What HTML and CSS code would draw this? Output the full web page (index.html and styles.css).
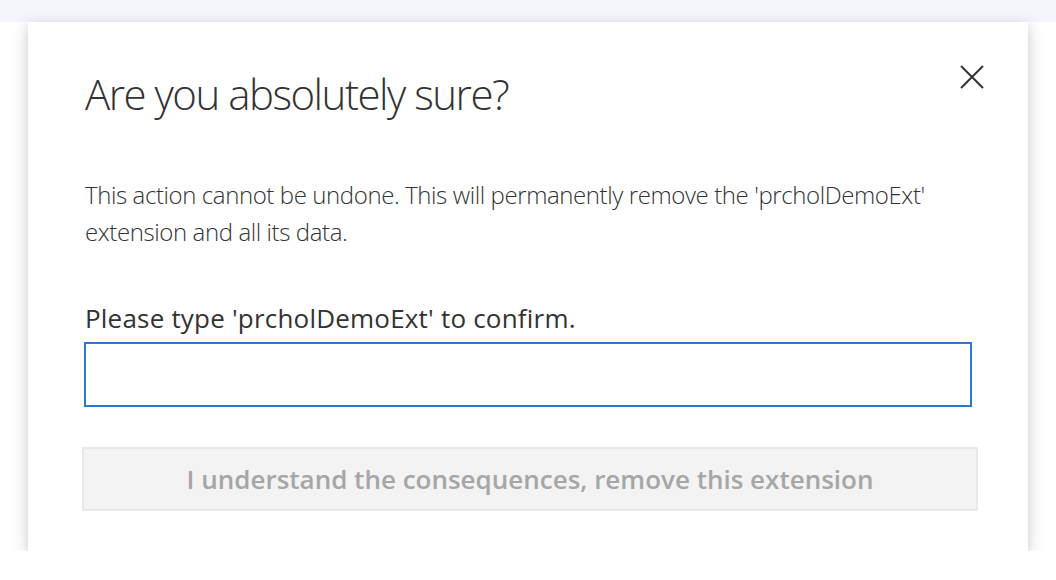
FILE: index.html
```html
<!DOCTYPE html>
<html lang="en">
<head>
<meta charset="utf-8">
<title>Remove extension</title>
<link rel="stylesheet" href="styles.css">
</head>
<body>
<div class="topbar"></div>
<div class="dialog" role="dialog" aria-labelledby="dlg-title">
  <div class="dialog-header">
    <h1 id="dlg-title" class="dialog-title">Are you absolutely sure?</h1>
    <button class="close-btn" aria-label="Close">
      <svg width="24" height="24" viewBox="0 0 24 24"><path d="M1 1 L23 23 M23 1 L1 23" stroke="#333" stroke-width="2" fill="none"/></svg>
    </button>
  </div>
  <p class="dialog-message">This action cannot be undone. This will permanently remove the 'prcholDemoExt' extension and all its data.</p>
  <label class="confirm-label" for="confirm">Please type 'prcholDemoExt' to confirm.</label>
  <input id="confirm" class="confirm-input" type="text">
  <button class="remove-btn" disabled>I understand the consequences, remove this extension</button>
</div>
</body>
</html>
```

FILE: styles.css
```css
html, body {
  margin: 0;
  padding: 0;
  background: #ffffff;
  font-family: "Open Sans", "Noto Sans", sans-serif;
  color: #333333;
}

.topbar {
  height: 22px;
  background: #f3f7fb;
}

.dialog {
  width: 1000px;
  height: 529px;
  margin: 0 28px;
  box-sizing: border-box;
  background: #ffffff;
  box-shadow: 0 4px 14px rgba(0, 0, 0, 0.22);
  padding: 0 56px;
  display: flex;
  flex-direction: column;
}

.dialog-header {
  display: flex;
  justify-content: space-between;
  align-items: flex-start;
  padding-top: 44px;
}

.dialog-title {
  margin: 0;
  font-size: 42px;
  font-weight: 300;
  line-height: 56px;
  letter-spacing: -1.5px;
  color: #333333;
  padding-left: 1px;
}

.close-btn {
  margin: -1px -12px 0 0;
  padding: 0;
  border: 0;
  background: none;
  width: 24px;
  height: 24px;
}

.close-btn svg {
  display: block;
}

.dialog-message {
  margin: 54px 0 0 1px;
  font-size: 24px;
  font-weight: 300;
  line-height: 37px;
  color: #333333;
  letter-spacing: -0.4px;
}

.confirm-label {
  margin-top: 51px;
  padding-left: 1px;
  font-size: 26px;
  line-height: 34px;
  color: #333333;
  letter-spacing: 0.2px;
}

.confirm-input {
  margin-top: 7px;
  height: 65px;
  box-sizing: border-box;
  border: 2px solid #2b78d0;
  outline: none;
  font-size: 22px;
  font-family: inherit;
  padding: 0 10px;
}

.remove-btn {
  margin: 40px -6px 0 -2px;
  height: 64px;
  box-sizing: border-box;
  border: 2px solid #e8e8e8;
  background: #f3f3f3;
  color: #a6a6a6;
  font-family: inherit;
  font-size: 26px;
  font-weight: 600;
}
```
